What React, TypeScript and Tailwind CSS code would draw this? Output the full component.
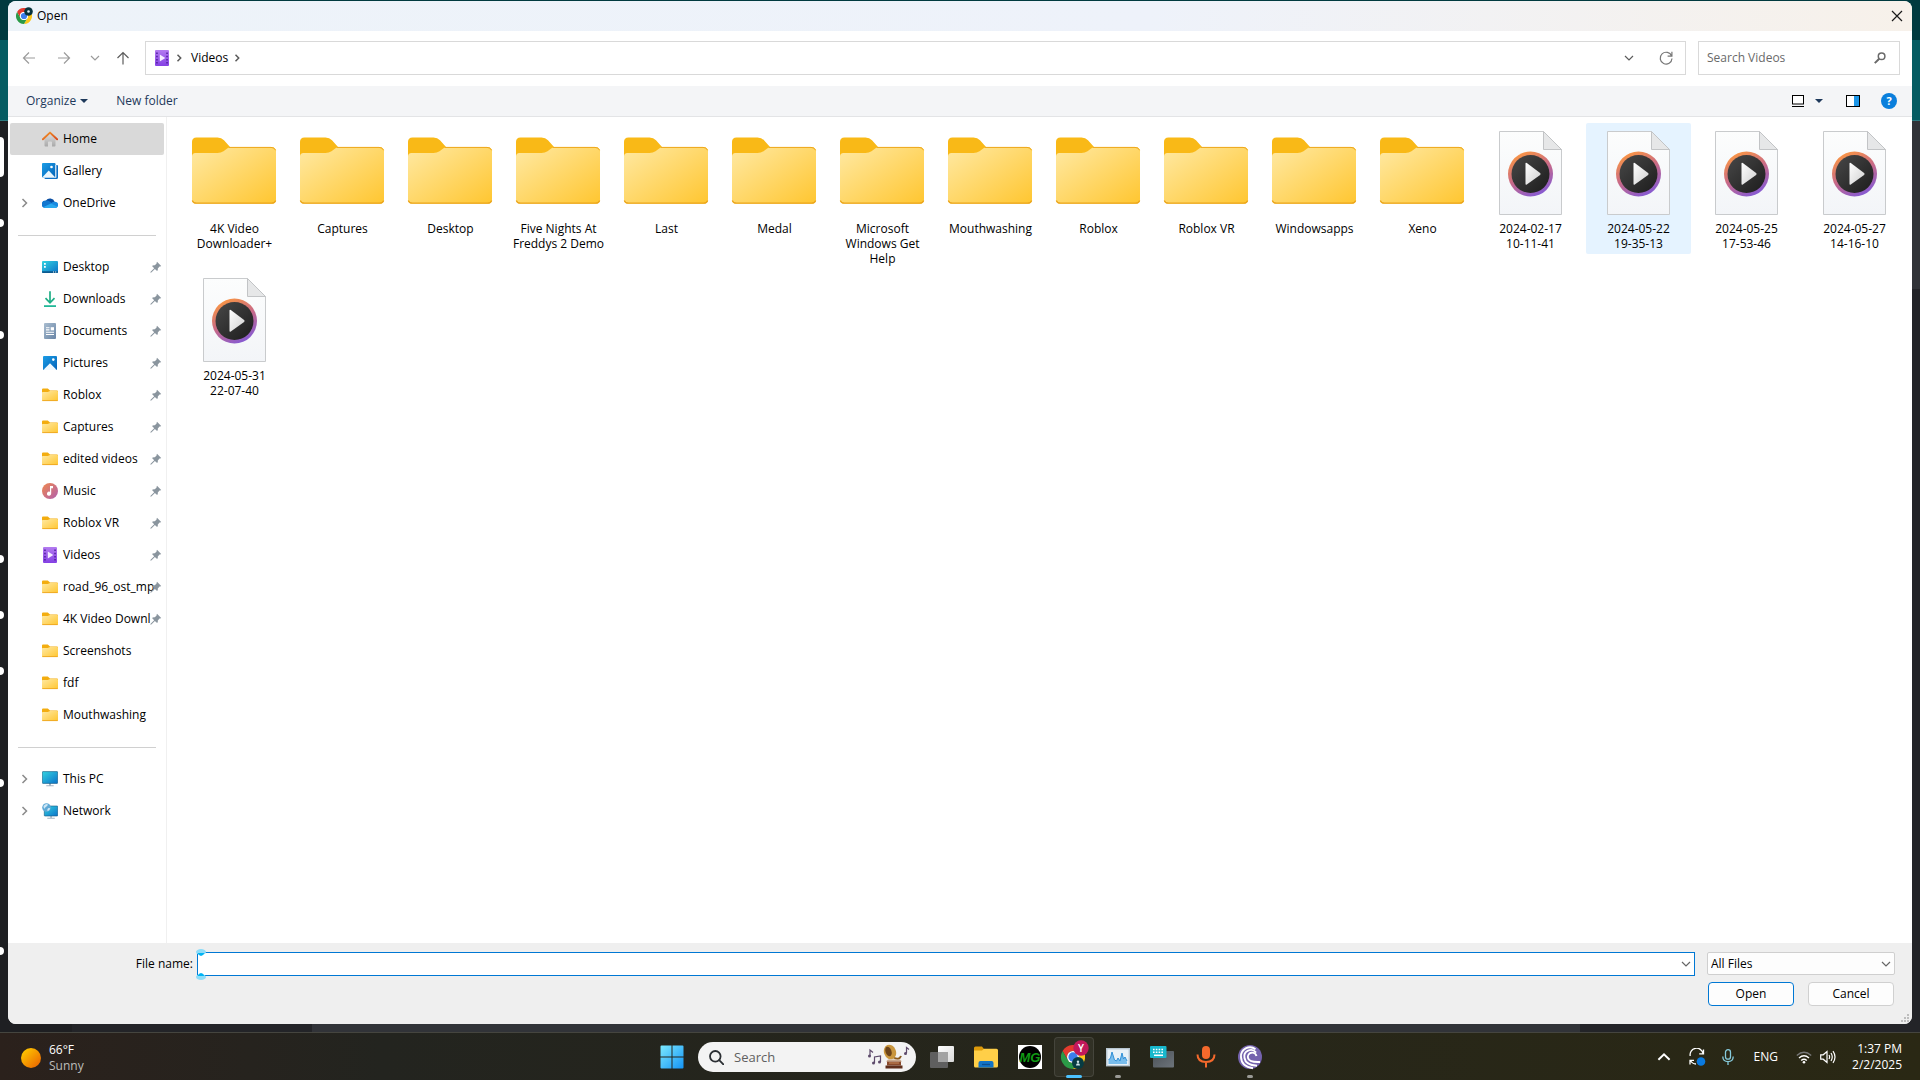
import { ReactNode } from "react";
import clsx from "clsx";

type SideItem = { label: string; icon: ReactNode; pin?: boolean; arrow?: boolean; active?: boolean };

/* ---------- shared gradients ---------- */

function Gradients() {
  return (
    <svg className="absolute h-0 w-0" aria-hidden="true">
      <defs>
        <linearGradient id="folder" x1="0" y1="0" x2="1" y2="1">
          <stop offset="0" stopColor="#ffe9a3" />
          <stop offset="1" stopColor="#ffc630" />
        </linearGradient>
        <linearGradient id="page" x1="0" y1="0" x2="0" y2="1">
          <stop offset="0" stopColor="#fcfdfd" />
          <stop offset="1" stopColor="#f3f5f8" />
        </linearGradient>
        <linearGradient id="ring" x1="0.2" y1="0" x2="0.7" y2="1">
          <stop offset="0" stopColor="#ff9a3d" />
          <stop offset="0.5" stopColor="#c96a86" />
          <stop offset="1" stopColor="#8359d6" />
        </linearGradient>
        <linearGradient id="disc" x1="0" y1="0" x2="1" y2="1">
          <stop offset="0" stopColor="#484848" />
          <stop offset="1" stopColor="#1c1c1c" />
        </linearGradient>
        <linearGradient id="play" x1="0" y1="0" x2="1" y2="1">
          <stop offset="0" stopColor="#ffffff" />
          <stop offset="1" stopColor="#cfcfcf" />
        </linearGradient>
        <linearGradient id="blue" x1="0" y1="0" x2="1" y2="1">
          <stop offset="0" stopColor="#1c9de6" />
          <stop offset="1" stopColor="#0262b8" />
        </linearGradient>
        <linearGradient id="cyan" x1="0" y1="0" x2="1" y2="1">
          <stop offset="0" stopColor="#33d3e0" />
          <stop offset="1" stopColor="#0b72c9" />
        </linearGradient>
        <linearGradient id="violet" x1="0" y1="0" x2="0" y2="1">
          <stop offset="0" stopColor="#b37bf0" />
          <stop offset="1" stopColor="#8440e4" />
        </linearGradient>
        <linearGradient id="music" x1="0" y1="0" x2="1" y2="1">
          <stop offset="0" stopColor="#f0884d" />
          <stop offset="1" stopColor="#b05fb0" />
        </linearGradient>
        <linearGradient id="doc" x1="0" y1="0" x2="1" y2="1">
          <stop offset="0" stopColor="#a9bdd0" />
          <stop offset="1" stopColor="#6985a6" />
        </linearGradient>
        <linearGradient id="home" x1="0" y1="0" x2="0" y2="1">
          <stop offset="0" stopColor="#dedede" />
          <stop offset="1" stopColor="#a9a9a9" />
        </linearGradient>
        <linearGradient id="roof" x1="0" y1="0" x2="1" y2="1">
          <stop offset="0" stopColor="#f39a2b" />
          <stop offset="1" stopColor="#d9491c" />
        </linearGradient>
        <linearGradient id="sun" x1="0" y1="0" x2="1" y2="1">
          <stop offset="0.1" stopColor="#ffc800" />
          <stop offset="1" stopColor="#e85d00" />
        </linearGradient>
        <linearGradient id="start" x1="0" y1="0" x2="24" y2="24" gradientUnits="userSpaceOnUse">
          <stop offset="0" stopColor="#7eebff" />
          <stop offset="1" stopColor="#1292f5" />
        </linearGradient>
        <linearGradient id="slate" x1="0" y1="0" x2="1" y2="1">
          <stop offset="0" stopColor="#4b5157" />
          <stop offset="1" stopColor="#6d747b" />
        </linearGradient>
        <linearGradient id="fog" x1="0" y1="0" x2="1" y2="1">
          <stop offset="0" stopColor="#ffffff" />
          <stop offset="1" stopColor="#d9d9d9" />
        </linearGradient>
      </defs>
    </svg>
  );
}

/* ---------- small icons ---------- */

const small = "h-4 w-4 shrink-0";

const HomeIcon = () => (
  <svg className={small} viewBox="0 0 16 16">
    <path d="M2.500 7.500 8 2.400l5.500 5.100v7q0 .9-.9.900H10v-4.200q0-.8-.8-.8H6.800q-.8 0-.8.800v4.200H3.400q-.9 0-.9-.9z" fill="url(#home)" />
    <path d="M.9 8.300 8 1.600l7.100 6.700" fill="none" stroke="url(#roof)" strokeWidth="1.900" strokeLinecap="round" strokeLinejoin="round" />
  </svg>
);

const GalleryIcon = () => (
  <svg className={small} viewBox="0 0 16 16">
    <path d="M14.200 2H15q1 0 1 1v11.500q0 1.500-1.500 1.500H3.500q-1 0-1-.8V14.500h11.700z" fill="#0c6fc4" />
    <rect width="13.500" height="14.500" rx="1" fill="url(#blue)" />
    <path d="M.4 14.200 6.700 7.400l6.400 6.800q-.3.300-.8.300H1.200q-.5 0-.8-.3z" fill="#e9f6fd" />
    <circle cx="9.500" cy="4" r="1.300" fill="#fff" />
    <path d="M13.500 2h.7v12.700H2v-.2h11.500z" fill="#fff" />
  </svg>
);

const CloudIcon = () => (
  <svg className={small} viewBox="0 0 16 16">
    <path d="M3.800 5.800A5 5 0 0 1 12.700 7l-4 5L1 11z" fill="#0a4fa3" />
    <path d="M3.500 5.600q2.200-.6 4.200 1l5 3.400-2 3H3.200A3.700 3.700 0 0 1 3.500 5.600z" fill="#1277cf" />
    <path d="M9.500 8A4 4 0 0 1 13 6.700 3.200 3.200 0 0 1 13 13.100H5z" fill="#1a8ae0" />
    <path d="M1.500 12 9 8.500l6.400 3.200q-.8 1.400-2.400 1.400H3.500Q2.300 13.100 1.500 12z" fill="#2aa9ef" />
  </svg>
);

const DesktopIcon = () => (
  <svg className={small} viewBox="0 0 16 16">
    <rect y="2" width="16" height="12" rx="1" fill="url(#cyan)" />
    <path d="M0 12.200h16v.8q0 1-1 1H1q-1 0-1-1z" fill="#0b5a8f" />
    <path d="M2 4h1.800v1.700H2zM2 7h1.800v1.700H2zM11 12.600h1v.9h-1zM13.200 12.600h1v.9h-1z" fill="#fff" />
  </svg>
);

const DownloadIcon = () => (
  <svg className={small} viewBox="0 0 16 16">
    <path d="M8 .2v11.300M3.500 7.200 8 11.800l4.500-4.600" fill="none" stroke="#1fae86" strokeWidth="1.700" />
    <path d="M2 15.100h12" stroke="#17b593" strokeWidth="1.700" />
  </svg>
);

const DocumentIcon = () => (
  <svg className={small} viewBox="0 0 16 16">
    <rect x="2" width="12" height="16" rx="1" fill="url(#doc)" />
    <path d="M4 4.700h3.500M4 6.900h3.500M4 9.200h8M4 11.500h8" stroke="#fff" strokeWidth="1.100" />
    <rect x="8.700" y="4.200" width="3.300" height="3.200" fill="#fff" />
  </svg>
);

const PictureIcon = () => (
  <svg className={small} viewBox="0 0 16 16">
    <rect x="1" y="1" width="14" height="14" rx="1" fill="url(#blue)" />
    <path d="M1.700 14.600 8 8.300l6.300 6.300q-.3.400-.9.400H2.600q-.6 0-.9-.4z" fill="#eef8fe" />
    <circle cx="11.300" cy="4.600" r="1.300" fill="#fff" />
  </svg>
);

const FolderSmall = () => (
  <svg className={small} viewBox="0 0 16 16">
    <path d="M0 2.600Q0 1.500 1 1.500h4.800L8 3.400h7q1 0 1 1V8H0z" fill="#f3ad10" />
    <path d="M0 5.500q0-.6.7-.6h5.100l2.300-1H15q1 0 1 1v8.300q0 .8-.8.800H.8q-.8 0-.8-.8z" fill="url(#folder)" />
    <path d="M.3 13.600h15.400" stroke="#eda51f" strokeWidth=".9" />
  </svg>
);

const MusicIcon = () => (
  <svg className={small} viewBox="0 0 16 16">
    <circle cx="8" cy="8" r="8" fill="url(#music)" />
    <path d="M8 3h3v2.200H9.200v5.400A2.100 2.100 0 1 1 8 8.700z" fill="#fff" />
  </svg>
);

const VideoIcon = () => (
  <svg className={small} viewBox="0 0 16 16">
    <rect x="1" width="14" height="16" rx="1" fill="url(#violet)" />
    <path d="M2.200 2.500h1.500V4H2.200zM2.200 5.700h1.500v1.500H2.200zM2.200 8.900h1.500v1.500H2.200zM2.200 12h1.500v1.500H2.200zM12.300 2.500h1.500V4h-1.500zM12.300 5.700h1.500v1.500h-1.500zM12.300 8.900h1.500v1.500h-1.500zM12.300 12h1.500v1.500h-1.500z" fill="#4f1d9b" />
    <path d="M5.800 4.500v7L11.300 8z" fill="#f4ecff" />
  </svg>
);

const PcIcon = () => (
  <svg className={small} viewBox="0 0 16 16">
    <path d="M7 12h2v2.500H7zM4.300 14.300h7.400v1H4.300z" fill="#a5b4c2" />
    <rect x=".3" y=".6" width="15.400" height="11.800" rx=".7" fill="url(#cyan)" stroke="#14577f" strokeWidth=".6" />
  </svg>
);

const NetworkIcon = () => (
  <svg className={small} viewBox="0 0 16 16">
    <path d="M8.300 13h1.500v1.700H8.300zM5.300 14.700h7.500v1H5.300z" fill="#a5b4c2" />
    <rect x="2.300" y="3" width="13.400" height="10" rx=".6" fill="url(#cyan)" stroke="#14577f" strokeWidth=".6" />
    <circle cx="4.500" cy="4.500" r="4.300" fill="#5fa9d6" />
    <path d="M1.500 3Q3 .7 5.500 1q.8 1.600-.7 2.300Q3 4 2.800 5.800 1.200 5 1.500 3zM6 5.300q1.800-.5 2.300.3Q7.500 7.800 5.500 8.200 5 6.500 6 5.300z" fill="#cfe7f5" />
  </svg>
);

const PinIcon = () => (
  <svg className="h-3 w-3 shrink-0" viewBox="0 0 12 12">
    <path d="M7 .8 11.200 5l-1 .6-.7-.1-1.700 1.900q.4 1.600-.7 2.700L4.900 7.900 1.300 11.500l-.9.200.2-.9 3.600-3.600L2 5q1.200-1.100 2.800-.7l1.800-1.700V1.800z" fill="#8a959e" />
  </svg>
);

const Chevron = ({ className, d = "M4.500 2 8.500 6l-4 4", w = 1.5 }: { className?: string; d?: string; w?: number }) => (
  <svg className={clsx("h-3 w-3 shrink-0", className)} viewBox="0 0 12 12" fill="none" stroke="currentColor" strokeWidth={w}>
    <path d={d} />
  </svg>
);
const DOWN = "M2 4l4 4 4-4";
const CRUMB = "M4.500 2.800 7.700 6 4.500 9.200";

const ChromeIcon = ({ className }: { className: string }) => (
  <svg className={className} viewBox="0 0 48 48">
    <path d="M3.200 12A24 24 0 0 1 44.800 12H24A12 12 0 0 0 13.600 30z" fill="#e33b2e" />
    <path d="M44.800 12A24 24 0 0 1 24 48L34.400 30A12 12 0 0 0 24 12z" fill="#fdc71a" />
    <path d="M24 48A24 24 0 0 1 3.200 12L13.600 30A12 12 0 0 0 34.400 30z" fill="#2b9a47" />
    <circle cx="24" cy="24" r="12" fill="#fff" />
    <circle cx="24" cy="24" r="9.300" fill="#3b7ded" />
  </svg>
);

/* ---------- file icons ---------- */

const FolderLarge = () => (
  <svg className="mx-1 h-24 w-24" viewBox="0 0 96 96">
    <path d="M6 17q0-4.500 4.500-4.500h21q4 0 6.500 2.700l6 6.800h41q5 0 5 4.500V40H6z" fill="#f9b917" />
    <path d="M6 31.500q0-3.500 3.500-3.500h22q3.500 0 6-1.800l4-3q1.500-1 3.500-1h40.500q4.500 0 4.500 4.500v47.500q0 4.500-4.500 4.500h-75q-4.500 0-4.500-4.500z" fill="url(#folder)" />
    <path d="M6.300 75.500q.8 2.700 4.200 2.700h75q3.400 0 4.200-2.700" fill="none" stroke="#eba51c" strokeWidth="1.200" />
    <path d="M43 22.400h42q3.500 0 4.500 2.800" fill="none" stroke="#eda71d" strokeWidth="1" />
  </svg>
);

const MediaFile = () => (
  <svg className="mx-1 h-24 w-24" viewBox="0 0 96 96">
    <path d="M17.500 6.500h44l18 18v65h-62z" fill="url(#page)" stroke="#c9cbcd" />
    <path d="M61.500 6.500l18 18h-18z" fill="#e6e7e8" stroke="#c2c4c6" />
    <circle cx="48.500" cy="49" r="22.500" fill="url(#ring)" />
    <circle cx="48.500" cy="49" r="19" fill="url(#disc)" />
    <path d="M43.500 38.800q0-1.400 1.300-.7L58.100 48.100q1.100.9 0 1.800L44.800 59.500q-1.300.7-1.300-.7z" fill="url(#play)" />
  </svg>
);

/* ---------- data ---------- */

const topItems: SideItem[] = [
  { label: "Home", icon: <HomeIcon />, active: true },
  { label: "Gallery", icon: <GalleryIcon /> },
  { label: "OneDrive", icon: <CloudIcon />, arrow: true },
];

const quickItems: SideItem[] = [
  { label: "Desktop", icon: <DesktopIcon />, pin: true },
  { label: "Downloads", icon: <DownloadIcon />, pin: true },
  { label: "Documents", icon: <DocumentIcon />, pin: true },
  { label: "Pictures", icon: <PictureIcon />, pin: true },
  { label: "Roblox", icon: <FolderSmall />, pin: true },
  { label: "Captures", icon: <FolderSmall />, pin: true },
  { label: "edited videos", icon: <FolderSmall />, pin: true },
  { label: "Music", icon: <MusicIcon />, pin: true },
  { label: "Roblox VR", icon: <FolderSmall />, pin: true },
  { label: "Videos", icon: <VideoIcon />, pin: true },
  { label: "road_96_ost_mp", icon: <FolderSmall />, pin: true },
  { label: "4K Video Downl", icon: <FolderSmall />, pin: true },
  { label: "Screenshots", icon: <FolderSmall /> },
  { label: "fdf", icon: <FolderSmall /> },
  { label: "Mouthwashing", icon: <FolderSmall /> },
];

const deviceItems: SideItem[] = [
  { label: "This PC", icon: <PcIcon />, arrow: true },
  { label: "Network", icon: <NetworkIcon />, arrow: true },
];

const folders = [
  "4K Video Downloader+",
  "Captures",
  "Desktop",
  "Five Nights At Freddys 2 Demo",
  "Last",
  "Medal",
  "Microsoft Windows Get Help",
  "Mouthwashing",
  "Roblox",
  "Roblox VR",
  "Windowsapps",
  "Xeno",
];

const videos = [
  ["2024-02-17", "10-11-41"],
  ["2024-05-22", "19-35-13"],
  ["2024-05-25", "17-53-46"],
  ["2024-05-27", "14-16-10"],
  ["2024-05-31", "22-07-40"],
];

/* ---------- window parts ---------- */

function TitleBar() {
  return (
    <header className="flex h-[30px] shrink-0 items-center bg-linear-to-r from-[#edf3f9] via-[#eef2fa] via-60% to-[#f7f1ea] pl-2 pr-[9px]">
      <span className="relative h-4 w-4">
        <ChromeIcon className="h-4 w-4" />
        <svg className="absolute -right-px -top-px h-[9px] w-[9px]" viewBox="0 0 9 9">
          <circle cx="4.500" cy="4.500" r="4.300" fill="#06333c" />
          <circle cx="4.500" cy="4.500" r="1.300" fill="#d8eef2" />
        </svg>
      </span>
      <h1 className="ml-[5px] flex-1">Open</h1>
      <button aria-label="Close" className="flex h-3 w-3 items-center justify-center">
        <svg className="h-3 w-3" viewBox="0 0 12 12" stroke="#1a1a1a" strokeWidth="1.200">
          <path d="M1 1l10 10M11 1 1 11" />
        </svg>
      </button>
    </header>
  );
}

const Arrow = ({ d, className }: { d: string; className?: string }) => (
  <svg className={clsx("h-[14px] w-[14px]", className)} viewBox="0 0 14 14" fill="none" stroke="currentColor" strokeWidth="1.200">
    <path d={d} />
  </svg>
);

function AddressRow() {
  return (
    <div className="flex h-[55px] shrink-0 items-center bg-white pb-px pl-[14px] pr-3 text-[#9b9b9b]">
      <button aria-label="Back"><Arrow d="M13 7H1.500M7 1.500 1.500 7 7 12.500" /></button>
      <button aria-label="Forward" className="ml-[21px]"><Arrow d="M1 7h11.500M7 1.500 12.500 7 7 12.500" /></button>
      <button aria-label="Recent locations" className="ml-[18px]"><Chevron d={DOWN} w={1.2} /></button>
      <button aria-label="Up" className="ml-[15px] text-[#5c5c5c]"><Arrow d="M7 13.500V1.500M1.500 7 7 1.500 12.500 7" /></button>

      <div className="ml-[15px] flex h-[34px] flex-1 items-center border border-[#d9d9d9] pl-2 text-[#5c5c5c]">
        <VideoIcon />
        <Chevron className="ml-[3px]" d={CRUMB} />
        <a href="#videos" className="ml-[6px] text-black">Videos</a>
        <Chevron className="ml-[3px]" d={CRUMB} />
        <button aria-label="Previous locations" className="ml-auto"><Chevron d={DOWN} w={1.2} /></button>
        <button aria-label="Refresh" className="ml-[23px] mr-[11px]">
          <svg className="h-4 w-4" viewBox="0 0 16 16" fill="none" stroke="#777" strokeWidth="1.200">
            <path d="M13.600 6A5.900 5.900 0 1 0 14 8.500M13.900 1.800v4.300H9.600" />
          </svg>
        </button>
      </div>

      <div className="ml-3 flex h-[34px] w-[202px] items-center border border-[#d9d9d9] pl-2 pr-[13px]">
        <input aria-label="Search Videos" placeholder="Search Videos" className="min-w-0 flex-1 outline-none placeholder:text-[#6a6a6a]" />
        <svg className="h-3 w-3 shrink-0" viewBox="0 0 12 12" fill="none" stroke="#6a6a6a">
          <circle cx="7.600" cy="4.300" r="3.300" strokeWidth="1.500" />
          <path d="M5.200 6.700.8 11.100" strokeWidth="2" />
        </svg>
      </div>
    </div>
  );
}

const Caret = ({ className }: { className?: string }) => (
  <svg className={clsx("h-1 w-2", className)} viewBox="0 0 8 4"><path d="M0 0h8L4 4z" fill="#1e395b" /></svg>
);

function Toolbar() {
  return (
    <div className="flex h-[31px] shrink-0 items-center border-b border-[#e3e4e6] bg-[#f4f5f7] pl-[18px] pr-[15px] text-[#1e395b]">
      <button className="flex items-center gap-1">Organize <Caret /></button>
      <button className="ml-7">New folder</button>
      <button aria-label="Change view" className="ml-auto flex items-center gap-[10px]">
        <svg className="h-[14px] w-[14px]" viewBox="0 0 14 14" fill="#fff" stroke="#000">
          <rect x="1.500" y="1.500" width="11" height="8.500" />
          <path d="M1 12.500h12" />
        </svg>
        <Caret />
      </button>
      <button aria-label="Preview pane" className="ml-[23px]">
        <svg className="h-[14px] w-[14px]" viewBox="0 0 14 14">
          <rect x=".5" y="1.500" width="13" height="11" fill="#fff" stroke="#000" />
          <path d="M8 2h5v10H8z" fill="#1c96e8" />
        </svg>
      </button>
      <button aria-label="Help" className="ml-[21px] flex h-4 w-4 items-center justify-center rounded-full bg-[#0a7fdc] text-[11px] font-bold text-white">?</button>
    </div>
  );
}

function SideRow({ label, icon, pin, arrow, active }: SideItem) {
  return (
    <li>
      <a href="#folder" className={clsx("flex h-8 items-center rounded-xs pl-2 pr-[2px]", active && "bg-[#d9d9d9]")}>
        <span className="w-6 text-[#8a8a8a]">{arrow && <Chevron />}</span>
        {icon}
        <span className="ml-[5px] min-w-0 flex-1 whitespace-nowrap">{label}</span>
        {pin && <PinIcon />}
      </a>
    </li>
  );
}

const Divider = () => <hr className="mx-2 mb-[15px] mt-4 border-0 border-t border-[#d0d0d0]" />;

function Sidebar() {
  return (
    <nav className="w-[159px] shrink-0 border-r border-[#f0f0f0] pl-[2px] pr-[2px] pt-[6px]">
      <ul>{topItems.map((i) => <SideRow key={i.label} {...i} />)}</ul>
      <Divider />
      <ul>{quickItems.map((i) => <SideRow key={i.label} {...i} />)}</ul>
      <Divider />
      <ul>{deviceItems.map((i) => <SideRow key={i.label} {...i} />)}</ul>
    </nav>
  );
}

function Files() {
  return (
    <ul className="grid flex-1 grid-cols-[repeat(auto-fill,105px)] content-start gap-x-[3px] gap-y-px pl-[15px] pt-[6px] text-center leading-[15px]">
      {folders.map((name) => (
        <li key={name} className="pb-[3px] pt-[2px]">
          <FolderLarge />
          <p className="px-1">{name}</p>
        </li>
      ))}
      {videos.map(([date, time]) => (
        <li key={date} className={clsx("self-start rounded-xs pb-[3px] pt-[2px]", date === "2024-05-22" && "bg-[#e5f3ff]")}>
          <MediaFile />
          <p>{date}<br />{time}</p>
        </li>
      ))}
    </ul>
  );
}

const Handle = ({ className }: { className: string }) => (
  <svg className={clsx("absolute -left-[2px] h-2 w-[10px]", className)} viewBox="0 0 10 8">
    <ellipse cx="5" cy="3" rx="5" ry="3" fill="#8edcf8" />
    <path d="M1.500 4h7Q7 7 5 7T1.500 4z" fill="#00b4f4" />
  </svg>
);

function Footer() {
  return (
    <footer className="relative flex h-[81px] shrink-0 gap-3 bg-[#efefef] pr-[17px] pt-[9px]">
      <div className="flex h-6 flex-1 items-center">
        <label htmlFor="filename" className="w-[189px] pr-1 text-right">File name:</label>
        <div className="relative flex h-6 flex-1 items-center border border-[#0078d4] bg-white pr-[2px] text-[#666]">
          <input id="filename" className="h-full min-w-0 flex-1 px-1 text-black outline-none" />
          <Chevron d={DOWN} w={1.2} />
          <Handle className="-top-1" />
          <Handle className="-bottom-[5px] rotate-180" />
        </div>
      </div>
      <div className="w-[188px]">
        <div className="relative">
          <select aria-label="File type" className="block h-[23px] w-full appearance-none rounded-xs border border-[#cfcfcf] bg-[#fdfdfd] px-[3px] leading-[15px]">
            <option>All Files</option>
          </select>
          <Chevron className="pointer-events-none absolute right-[3px] top-[6px] text-[#666]" d={DOWN} w={1.2} />
        </div>
        <div className="mt-[7px] flex justify-between px-px">
          <button className="h-6 w-[86px] rounded-sm border border-[#0078d4] bg-[#fdfdfd]">Open</button>
          <button className="h-6 w-[86px] rounded-sm border border-[#d0d0d0] bg-[#fdfdfd]">Cancel</button>
        </div>
      </div>
      <svg className="absolute bottom-[2px] right-[3px] h-2 w-2" viewBox="0 0 8 8" fill="#bdbdbd">
        <path d="M6 0h2v2H6zM6 3h2v2H6zM3 3h2v2H3zM6 6h2v2H6zM3 6h2v2H3zM0 6h2v2H0z" />
      </svg>
    </footer>
  );
}

/* ---------- desktop behind the window ---------- */

const dots = ["top-[219px]", "top-[331px]", "top-[555px]", "top-[611px]", "top-[667px]", "top-[779px]", "top-[947px]"];

function Backdrop() {
  return (
    <div className="absolute inset-0 flex flex-col bg-[#003a3f]" aria-hidden="true">
      <div className="mt-10 h-[81px] border-b border-[#2c7b80] bg-[#055c62]" />
      <div className="flex flex-1">
        <div className="w-[72px] bg-[#1e1f22]" />
        <div className="w-60 bg-[#232428]" />
        <div className="flex-1 bg-[#313338]" />
        <div className="w-[340px] bg-[#232428]">
          <div className="h-[168px] bg-[#313338]" />
        </div>
      </div>
      <span className="absolute left-0 top-[137px] h-10 w-1 rounded-r-sm bg-white" />
      {dots.map((top) => <span key={top} className={clsx("absolute left-0 h-2 w-1 rounded-r-sm bg-white", top)} />)}
    </div>
  );
}

/* ---------- taskbar ---------- */

function TaskButton({ label, children, mark, active }: { label: string; children: ReactNode; mark?: boolean; active?: boolean }) {
  return (
    <button aria-label={label} className="relative flex h-12 w-11 items-center justify-center">
      {active && <span className="absolute inset-x-[2px] inset-y-1 rounded-sm border border-white/10 bg-white/5" />}
      <svg className="relative h-6 w-6 overflow-visible" viewBox="0 0 24 24">{children}</svg>
      {mark && <span className={clsx("absolute bottom-[3px] h-[3px] rounded-full", active ? "w-4 bg-[#4cc2ff]" : "w-[6px] bg-[#9a9a96]")} />}
    </button>
  );
}

const Gramophone = () => (
  <svg className="h-[26px] w-[42px]" viewBox="0 0 42 26">
    <path d="M2 12V6l3 2.500M6.500 19v-6l6-1v6" fill="none" stroke="#5d4a6b" strokeWidth="1.200" />
    <circle cx="1.500" cy="12" r="1.500" fill="#5d4a6b" />
    <circle cx="5.500" cy="19" r="1.500" fill="#5d4a6b" />
    <circle cx="11.500" cy="18" r="1.500" fill="#5d4a6b" />
    <path d="M38.500 9V3.500l2.500 2" fill="none" stroke="#5d4a6b" strokeWidth="1.200" />
    <circle cx="37.500" cy="9.500" r="1.500" fill="#5d4a6b" />
    <path d="M25 13q6 4 8-1" fill="none" stroke="#8a5a1c" strokeWidth="2" />
    <ellipse cx="22" cy="8" rx="6" ry="7.500" fill="#c9963e" transform="rotate(-20 22 8)" />
    <ellipse cx="20.500" cy="7.500" rx="3" ry="5" fill="#6b431a" transform="rotate(-20 20.500 7.500)" />
    <path d="M20 15.500h12l2 2H18z" fill="#caa98c" />
    <path d="M19 17.500h14v4H19z" fill="#8a4a2b" />
    <path d="M17.500 21.500h17v3h-17z" fill="#5f2e1b" />
    <path d="M21 19h10" stroke="#c98b5c" />
  </svg>
);

function Taskbar() {
  return (
    <footer className="relative grid h-12 shrink-0 grid-cols-[1fr_auto_1fr] items-center border-t border-[#45453f] bg-linear-to-r from-[#2b211c] via-[#23241f] via-20% to-[#2a2814] text-white">
      <button className="flex items-center gap-2 pl-[21px] text-left leading-4">
        <svg className="h-5 w-5" viewBox="0 0 20 20"><circle cx="10" cy="10" r="10" fill="url(#sun)" /></svg>
        <span>66°F<br /><span className="text-[#bdbdba]">Sunny</span></span>
      </button>

      <div className="flex items-center pb-px pl-[2px]">
        <TaskButton label="Start">
          <path d="M.5 1.500q0-1 1-1h10v11H.5zM12.500.5h10q1 0 1 1v10h-11zM.5 12.500h11v11h-10q-1 0-1-1zM12.500 12.500h11v10q0 1-1 1h-10z" fill="url(#start)" />
        </TaskButton>
        <label className="mx-1 flex h-[30px] w-[218px] items-center rounded-full bg-[#f3f3f3] pl-[11px] pr-[6px]">
          <svg className="h-[15px] w-[15px] shrink-0" viewBox="0 0 15 15" fill="none" stroke="#2b2f33" strokeWidth="1.800">
            <circle cx="6.300" cy="6.300" r="5.300" />
            <path d="m10.200 10.200 4.200 4.200" strokeLinecap="round" />
          </svg>
          <input aria-label="Search" placeholder="Search" className="ml-[10px] min-w-0 flex-1 text-[13px] outline-none placeholder:text-[#606060]" />
          <Gramophone />
        </label>
        <TaskButton label="Task view">
          <rect x="8" y="1" width="16" height="16" rx="1" fill="url(#fog)" />
          <rect y="7" width="18" height="16" rx="1" fill="#5f5f5f" />
          <path d="M8 7h10v10H8z" fill="#a3a3a3" />
        </TaskButton>
        <TaskButton label="File Explorer">
          <path d="M0 3q0-1.500 1.500-1.500H8L10 4v3H0z" fill="#dd9a0a" />
          <path d="M0 5.500h8l2-1.800h12.500q1.500 0 1.500 1.500V21q0 1.500-1.500 1.500h-21Q0 22.500 0 21z" fill="#ffcf48" />
          <path d="M4.500 22.500V18q0-2 2-2h11q2 0 2 2v4.500z" fill="#1273c6" />
          <path d="M8 19.500h8" stroke="#0b4f91" strokeWidth="1.300" />
        </TaskButton>
        <TaskButton label="MG">
          <rect width="24" height="24" fill="#fff" />
          <circle cx="12" cy="12" r="11" fill="#000" />
          <text x="12" y="16.500" textAnchor="middle" fontFamily="Liberation Sans, sans-serif" fontWeight="700" fontStyle="italic" fontSize="13" fill="#109a14">MG</text>
        </TaskButton>
        <TaskButton label="Google Chrome" mark active>
          <svg x="-1" y="0" width="24" height="24"><ChromeIcon className="" /></svg>
          <circle cx="19" cy="3" r="7.700" fill="#c2185b" />
          <text x="19" y="6.500" textAnchor="middle" fontFamily="Open Sans, sans-serif" fontWeight="600" fontSize="10" fill="#fff">Y</text>
          <circle cx="16" cy="18" r="6" fill="#073b42" />
          <path d="M14 20.500q0-2.300 2-2.300t2 2.300z" fill="#cfe5e8" />
          <circle cx="16" cy="16.800" r="1.200" fill="#cfe5e8" />
        </TaskButton>
        <TaskButton label="Resource Monitor" mark>
          <rect x=".7" y="3.700" width="22.600" height="17" fill="#e8f1f7" stroke="#b8c6d0" strokeWidth="1.400" />
          <path d="M2.500 19v-4l2-2 1.500-6 2.500 8 2 1 1.500-3 2 3 2-8 1.500 6 1.500-2 2 5v2z" fill="#79bdec" />
          <path d="m2.500 15 2-2 1.500-6 2.500 8 2 1 1.500-3 2 3 2-8 1.500 6 1.500-2 2 4" fill="none" stroke="#2e8fd6" />
        </TaskButton>
        <TaskButton label="On-Screen Keyboard">
          <rect x="3" y="6" width="21" height="16.500" rx="1" fill="url(#slate)" />
          <rect y="1" width="16.500" height="12" rx="1" fill="#18b8cd" />
          <path d="M3 4.500h11M3 7.200h11" stroke="#fff" strokeWidth="1.400" strokeDasharray="1.600 1.200" />
          <path d="M4 10.300h9" stroke="#fff" strokeWidth="1.500" />
        </TaskButton>
        <TaskButton label="Voice">
          <rect x="8" y="1" width="8" height="13" rx="4" fill="#f4692c" />
          <path d="M3.500 9.500q0 7.500 8.500 7.500t8.500-7.500M12 17v5.500" fill="none" stroke="#f4692c" strokeWidth="2" />
        </TaskButton>
        <TaskButton label="BitTorrent" mark>
          <circle cx="12" cy="12" r="12" fill="#7563ae" />
          <g fill="none" stroke="#fff" strokeWidth="1.900">
            <path d="M17.500 4.200A9 9 0 0 0 3 12q.3 9.500 12 11.300" />
            <path d="M18 7.600A6.500 6.500 0 0 0 6.500 13q1 7 12.500 7.700" />
            <path d="M18.500 11A4.300 4.300 0 0 0 10 13q1 4.500 12 4" />
          </g>
        </TaskButton>
      </div>

      <div className="flex items-center justify-end pb-px pr-[18px]">
        <Chevron className="h-4 w-4" d="M1.800 8 6 4l4.200 4" />
        <svg className="ml-4 h-[18px] w-[18px]" viewBox="0 0 18 18" fill="none" stroke="#fff" strokeWidth="1.300">
          <path d="M2.200 8A6.500 6.500 0 0 1 15 5.500M15.500 1.500v4.300h-4.300M2 16.500v-4.200h4M2.500 12.500q2 3.500 5.500 3.500" />
          <circle cx="13" cy="13.500" r="4.300" fill="#0a7ae0" stroke="none" />
        </svg>
        <svg className="ml-4 h-4 w-3" viewBox="0 0 12 16" fill="none" stroke="#86cbdc" strokeWidth="1.300">
          <rect x="3.500" y=".7" width="5" height="9.500" rx="2.500" />
          <path d="M.8 7.500q0 5.200 5.200 5.200t5.200-5.200M6 12.700V16" />
        </svg>
        <span className="ml-5">ENG</span>
        <svg className="ml-[18px] h-4 w-4" viewBox="0 0 16 16" fill="none" stroke="#fff" strokeWidth="1.400">
          <path d="M.8 6.500q7.200-6.500 14.400 0" stroke="#777" />
          <path d="M3 9q5-4.500 10 0M5.200 11.400q2.800-2.500 5.600 0" />
          <circle cx="8" cy="13.300" r="1.300" fill="#fff" stroke="none" />
        </svg>
        <svg className="ml-2 h-4 w-4" viewBox="0 0 16 16" fill="none" stroke="#fff" strokeWidth="1.200">
          <path d="M.7 5.800h2.500L7 2.500v11l-3.800-3.300H.7zM9 6q1.200 2 0 4M11 4q2.500 4 0 8M13 2.200q4 5.800 0 11.600" />
        </svg>
        <time className="ml-4 text-right leading-4">1:37 PM<br />2/2/2025</time>
      </div>
    </footer>
  );
}

export default function App() {
  return (
    <div className="relative flex min-h-screen flex-col overflow-hidden font-['Open_Sans',sans-serif] text-[12px] leading-4 text-black">
      <Gradients />
      <Backdrop />
      <main className="relative mx-2 mb-2 mt-px flex flex-1 flex-col overflow-hidden rounded-lg bg-white">
        <TitleBar />
        <AddressRow />
        <Toolbar />
        <div className="flex flex-1">
          <Sidebar />
          <Files />
        </div>
        <Footer />
      </main>
      <Taskbar />
    </div>
  );
}
